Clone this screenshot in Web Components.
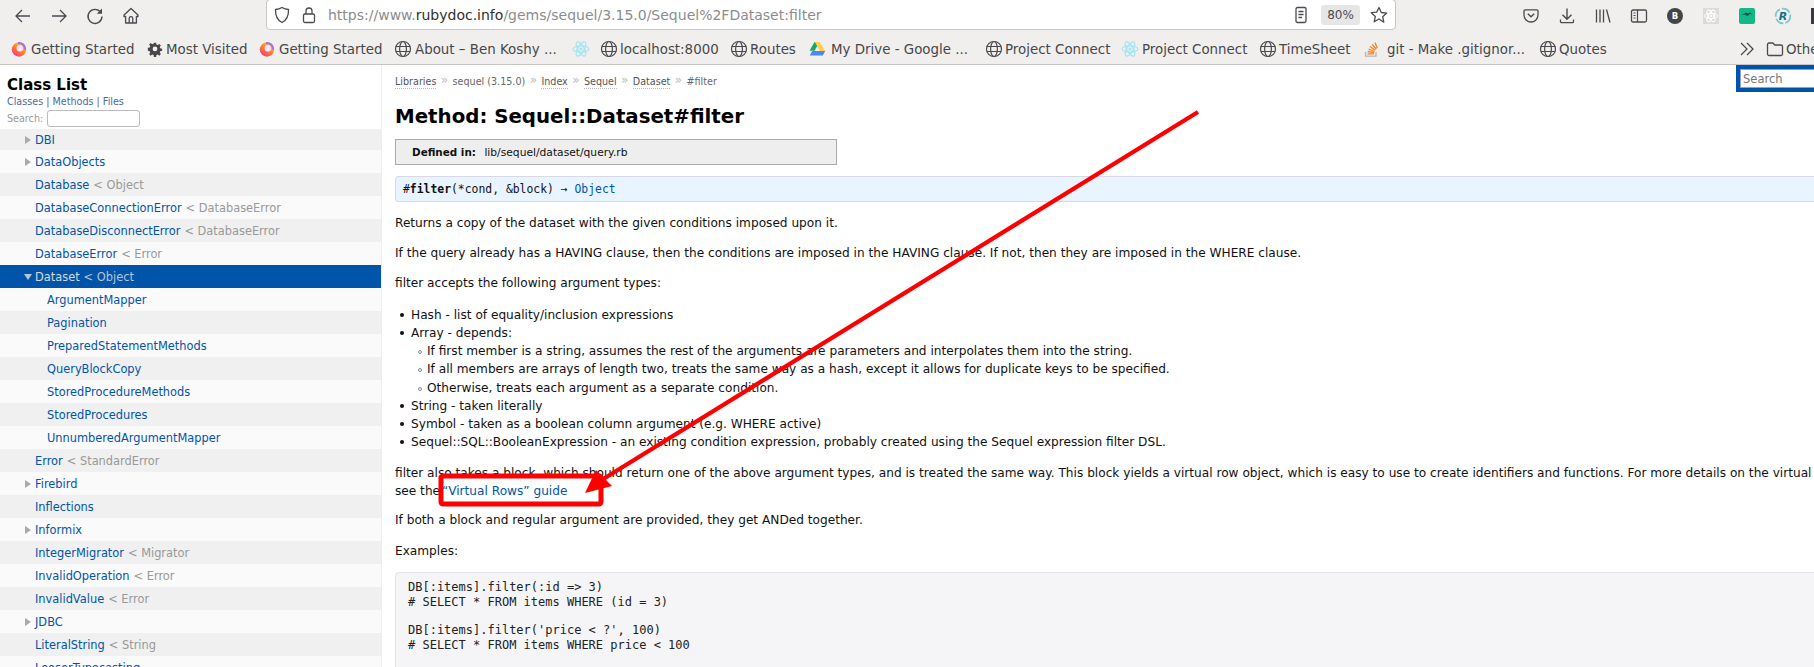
<!DOCTYPE html>
<html>
<head>
<meta charset="utf-8">
<title>Method: Sequel::Dataset#filter</title>
<style>
    html, body {
        margin: 0;
        height: 667px;
        overflow: hidden;
        background: #fff;
        font-family: "DejaVu Sans", sans-serif;
    }
    body {
        display: flex;
        flex-direction: column;
        position: relative;
    }
    .page {
        display: flex;
        flex: 1;
        min-height: 0;
    }
</style>
</head>
<body>
    <nav-toolbar></nav-toolbar>
    <bookmark-bar>
        <bookmark-item icon="firefox" width="136" gap="4">Getting Started</bookmark-item>
        <bookmark-item icon="gear" width="112">Most Visited</bookmark-item>
        <bookmark-item icon="firefox" width="136" gap="4">Getting Started</bookmark-item>
        <bookmark-item icon="globe" width="178" gap="4">About – Ben Koshy ...</bookmark-item>
        <bookmark-item icon="react" width="28"></bookmark-item>
        <bookmark-item icon="globe" width="130">localhost:8000</bookmark-item>
        <bookmark-item icon="globe" width="78">Routes</bookmark-item>
        <bookmark-item icon="drive" width="177" gap="6">My Drive - Google ...</bookmark-item>
        <bookmark-item icon="globe" width="136">Project Connect</bookmark-item>
        <bookmark-item icon="react" width="138" gap="4">Project Connect</bookmark-item>
        <bookmark-item icon="globe" width="103">TimeSheet</bookmark-item>
        <bookmark-item icon="so" width="177" gap="8">git - Make .gitignor...</bookmark-item>
        <bookmark-item icon="globe" width="199">Quotes</bookmark-item>
        <bookmark-item icon="chevrons" width="28"></bookmark-item>
        <bookmark-item icon="folder" width="60">Other Bookmarks</bookmark-item>
    </bookmark-bar>

    <div class="page">
        <class-list>
            <class-row arrow="right" first>DBI</class-row>
            <class-row arrow="right">DataObjects</class-row>
            <class-row sup="Object">Database</class-row>
            <class-row sup="DatabaseError">DatabaseConnectionError</class-row>
            <class-row sup="DatabaseError">DatabaseDisconnectError</class-row>
            <class-row sup="Error">DatabaseError</class-row>
            <class-row arrow="down" sup="Object" selected>Dataset</class-row>
            <class-row nested>ArgumentMapper</class-row>
            <class-row nested>Pagination</class-row>
            <class-row nested>PreparedStatementMethods</class-row>
            <class-row nested>QueryBlockCopy</class-row>
            <class-row nested>StoredProcedureMethods</class-row>
            <class-row nested>StoredProcedures</class-row>
            <class-row nested>UnnumberedArgumentMapper</class-row>
            <class-row sup="StandardError">Error</class-row>
            <class-row arrow="right">Firebird</class-row>
            <class-row>Inflections</class-row>
            <class-row arrow="right">Informix</class-row>
            <class-row sup="Migrator">IntegerMigrator</class-row>
            <class-row sup="Error">InvalidOperation</class-row>
            <class-row sup="Error">InvalidValue</class-row>
            <class-row arrow="right">JDBC</class-row>
            <class-row sup="String">LiteralString</class-row>
            <class-row>LooserTypecasting</class-row>
        </class-list>
        <doc-view></doc-view>
    </div>

    <corner-search></corner-search>
    <red-callout></red-callout>

<script>
const ICONS = {
    back: '<path d="M17 10H3.500M9 4l-6 6 6 6" fill="none" stroke="#4a4a4f" stroke-width="1.300"/>',
    forward: '<path d="M3 10h13.500M11 4l6 6-6 6" fill="none" stroke="#4a4a4f" stroke-width="1.300"/>',
    reload: '<path d="M15.600 6.200A7 7 0 1 0 17 10.500" fill="none" stroke="#4a4a4f" stroke-width="1.400"/><path d="M17 2.500v5.200h-5.200z" fill="#4a4a4f"/>',
    home: '<path d="M10 2.500L3 9v1.500h1.600V17h10.800v-6.500H17V9zM8.200 17v-4.600a1.800 1.800 0 0 1 3.600 0V17" fill="none" stroke="#4a4a4f" stroke-width="1.300" stroke-linejoin="round"/>',
    shield: '<path d="M10 2.500c2 1.300 4.300 1.900 6.500 2 .2 5.800-1.300 10.500-6.500 13-5.200-2.500-6.700-7.200-6.500-13 2.200-.1 4.500-.7 6.500-2z" fill="none" stroke="#4a4a4f" stroke-width="1.300"/>',
    lock: '<rect x="4.500" y="9" width="11" height="8.500" rx="1.500" fill="none" stroke="#4a4a4f" stroke-width="1.300"/><path d="M7 9V6a3 3 0 0 1 6 0v3" fill="none" stroke="#4a4a4f" stroke-width="1.300"/>',
    reader: '<rect x="5" y="2.500" width="10" height="15" rx="1.500" fill="none" stroke="#4a4a4f" stroke-width="1.300"/><path d="M7.500 6.500h5M7.500 9.500h5M7.500 12.500h3.500" stroke="#4a4a4f" stroke-width="1.300"/>',
    star: '<path d="M10 2.500l2.300 5 5.400.6-4 3.700 1.100 5.400L10 14l-4.800 2.800 1.100-5.400-4-3.700 5.400-.6z" fill="none" stroke="#4a4a4f" stroke-width="1.300" stroke-linejoin="round"/>',
    pocket: '<path d="M4 3.800h12a1 1 0 0 1 1 1V9a7 7 0 0 1-14 0V4.800a1 1 0 0 1 1-1z" fill="none" stroke="#4a4a4f" stroke-width="1.300"/><path d="M6.800 7.800L10 10.800l3.200-3" fill="none" stroke="#4a4a4f" stroke-width="1.400"/>',
    download: '<path d="M10 2.500v10.500M5.500 8.800L10 13.300l4.500-4.500" fill="none" stroke="#4a4a4f" stroke-width="1.400"/><path d="M3.500 13.500v2.200a1 1 0 0 0 1 1h11a1 1 0 0 0 1-1v-2.200" fill="none" stroke="#4a4a4f" stroke-width="1.300"/>',
    library: '<path d="M3.500 3.500v13M7 3.500v13M10.500 3.500v13M13.500 3.500l3.500 13" fill="none" stroke="#4a4a4f" stroke-width="1.300"/>',
    sidebar: '<rect x="2.500" y="4" width="15" height="12" rx="1.500" fill="none" stroke="#4a4a4f" stroke-width="1.300"/><path d="M8.500 4v12M4.500 7h2M4.500 9.500h2M4.500 12h2" stroke="#4a4a4f" stroke-width="1.200"/>',
    avatar: '<circle cx="10" cy="10" r="8" fill="#454548"/><text x="10" y="13.200" text-anchor="middle" font-family="DejaVu Sans" font-weight="700" font-size="8.500" fill="#fff">B</text>',
    reactbox: '<rect x="2" y="2" width="16" height="16" fill="#dbdbdb"/><g fill="none" stroke="#fff" stroke-width="1"><ellipse cx="10" cy="10" rx="6.500" ry="2.600"/><ellipse cx="10" cy="10" rx="6.500" ry="2.600" transform="rotate(60 10 10)"/><ellipse cx="10" cy="10" rx="6.500" ry="2.600" transform="rotate(120 10 10)"/></g><circle cx="10" cy="10" r="1.300" fill="#fff"/>',
    greenbox: '<rect x="2" y="2" width="16" height="16" rx="2" fill="#12b886"/><path d="M5 9l4-2.500 2 1 2-1 2.500 2-3-.5-1 1.500H9L8 8.500z" fill="#0d4f45"/>',
    rbadge: '<circle cx="10" cy="10" r="7.300" fill="none" stroke="#7cc9cd" stroke-width="1.800" stroke-dasharray="9 2"/><text x="10" y="14" text-anchor="middle" font-family="DejaVu Sans" font-style="italic" font-weight="700" font-size="11" fill="#176f85">R</text>',
    darkbox: '<rect x="2" y="2" width="16" height="16" fill="#3a3a3c"/>',
    firefox: '<defs><linearGradient id="ff" x1="0.800" y1="0.100" x2="0.200" y2="0.900"><stop offset="0" stop-color="#ffc83d"/><stop offset=".55" stop-color="#ff7a2f"/><stop offset="1" stop-color="#f43f78"/></linearGradient></defs><circle cx="10" cy="10.500" r="7.200" fill="url(#ff)"/><path d="M9 3a7.200 7.200 0 0 1 8.200 7.500l-2 .2A5.300 5.300 0 0 0 9 5.200z" fill="#a56df0"/><circle cx="10.800" cy="9.300" r="3.200" fill="#f5e9ff"/>',
    gear: '<g transform="translate(1.500 1.500) scale(.85)"><path d="M8.700 2.500h2.600l.4 2.200 1.500.6 1.900-1.300 1.800 1.800-1.300 1.900.6 1.500 2.200.4v2.600l-2.200.4-.6 1.500 1.300 1.900-1.800 1.800-1.900-1.300-1.500.6-.4 2.200H8.700l-.4-2.200-1.500-.6-1.900 1.300-1.800-1.800 1.300-1.900-.6-1.500-2.200-.4V8.600l2.200-.4.6-1.500L3.100 4.800 4.900 3l1.900 1.300 1.500-.6z" fill="#47474a"/><circle cx="10" cy="9.900" r="2.800" fill="#f0efee"/></g>',
    globe: '<g fill="none" stroke="#4a4a4f" stroke-width="1.200"><circle cx="10" cy="10" r="7.500"/><ellipse cx="10" cy="10" rx="3.400" ry="7.500"/><path d="M2.800 7.500h14.400M2.800 12.500h14.400"/></g>',
    react: '<g fill="none" stroke="#a3e4f7" stroke-width="1.200"><ellipse cx="10" cy="10" rx="8" ry="3.200"/><ellipse cx="10" cy="10" rx="8" ry="3.200" transform="rotate(60 10 10)"/><ellipse cx="10" cy="10" rx="8" ry="3.200" transform="rotate(120 10 10)"/></g><circle cx="10" cy="10" r="1.600" fill="#a3e4f7"/>',
    drive: '<path d="M7.500 3h5l-5 8.800H2.500z" fill="#1fa463"/><path d="M12.500 3l5.500 9h-5L7.800 3z" fill="#ffd04b"/><path d="M5.200 12h13l-2.500 4.500H2.700z" fill="#4687f4"/>',
    so: '<path d="M4.500 13v4.200h10.500V13" fill="none" stroke="#b5b5b5" stroke-width="1.300"/><path d="M6.500 14.800h6.500M6.700 12.500l6.400 1.100M7.500 10l6 2.500M9 7.500l5.300 3.700M11.200 5.300l4 4.800M14 3.500l2.300 5.700" stroke="#f48024" stroke-width="1.300" fill="none"/>',
    chevrons: '<path d="M4 4l6 6-6 6M10 4l6 6-6 6" fill="none" stroke="#4a4a4f" stroke-width="1.300"/>',
    folder: '<path d="M2.500 5.500a1.500 1.500 0 0 1 1.500-1.500h3.800l2 2H16a1.500 1.500 0 0 1 1.500 1.500v7.500A1.500 1.500 0 0 1 16 16.500H4A1.500 1.500 0 0 1 2.500 15z" fill="none" stroke="#4a4a4f" stroke-width="1.300"/>'
};

class ToolIcon extends HTMLElement {
    constructor() {
        super();
        this.shadowDOM = this.attachShadow({ mode: 'open' });
    }

    connectedCallback() {
        const size = this.getAttribute('size') || 20;
        this.shadowDOM.innerHTML = `
            <style>
                :host { display: inline-flex; flex: none; }
                svg { display: block; }
            </style>
            <svg width="${size}" height="${size}" viewBox="0 0 20 20">${ICONS[this.getAttribute('name')]}</svg>
        `;
    }
}

class NavToolbar extends HTMLElement {
    constructor() {
        super();
        this.shadowDOM = this.attachShadow({ mode: 'open' });
    }

    connectedCallback() {
        const slot = (name) => `<span class="slot"><tool-icon name="${name}"></tool-icon></span>`;
        this.shadowDOM.innerHTML = `
            <style>
                :host {
                    display: flex;
                    flex: none;
                    height: 33px;
                    padding-left: 5px;
                    background: #f0efee;
                    align-items: flex-start;
                    overflow: hidden;
                    font-family: "DejaVu Sans", sans-serif;
                }
                .slot {
                    flex: none;
                    width: 36px;
                    height: 31px;
                    display: flex;
                    align-items: center;
                    justify-content: center;
                }
                .nav { display: flex; flex: none; width: 145px; margin-right: 116px; }
                .url {
                    box-sizing: border-box;
                    flex: none;
                    width: 1130px;
                    height: 31px;
                    margin-top: -1px;
                    background: #fff;
                    border: 1px solid #c9c6c2;
                    border-radius: 4px;
                    display: flex;
                    align-items: center;
                    padding-left: 5px;
                    font-size: 14px;
                    color: #8c8c8c;
                }
                .url tool-icon { margin-right: 7px; }
                .addr { flex: 1; margin-left: 2px; white-space: nowrap; }
                .addr b { font-weight: 400; color: #303030; }
                .zoom {
                    width: 39px;
                    height: 20px;
                    margin: 0 9px 0 10px;
                    background: #e6e6e6;
                    border-radius: 3px;
                    font-size: 12px;
                    color: #4a4a4f;
                    display: flex;
                    align-items: center;
                    justify-content: center;
                }
                .tools { display: flex; flex: none; margin-left: 117px; }
            </style>
            <div class="nav">${['back', 'forward', 'reload', 'home'].map(slot).join('')}</div>
            <div class="url">
                <tool-icon name="shield"></tool-icon>
                <tool-icon name="lock"></tool-icon>
                <span class="addr">https://www.<b>rubydoc.info</b>/gems/sequel/3.15.0/Sequel%2FDataset:filter</span>
                <tool-icon name="reader" style="margin:0"></tool-icon>
                <span class="zoom">80%</span>
                <tool-icon name="star" style="margin:0 6px 0 0"></tool-icon>
            </div>
            <div class="tools">${['pocket', 'download', 'library', 'sidebar', 'avatar', 'reactbox', 'greenbox', 'rbadge', 'darkbox'].map(slot).join('')}</div>
        `;
    }
}

class BookmarkBar extends HTMLElement {
    constructor() {
        super();
        this.shadowDOM = this.attachShadow({ mode: 'open' });
    }

    connectedCallback() {
        this.shadowDOM.innerHTML = `
            <style>
                :host {
                    display: flex;
                    flex: none;
                    box-sizing: border-box;
                    height: 32px;
                    padding: 1px 0 0 10px;
                    background: #f0efee;
                    border-bottom: 1px solid #c8c6c3;
                    align-items: center;
                    overflow: hidden;
                    white-space: nowrap;
                }
            </style>
            <slot></slot>
        `;
    }
}

class BookmarkItem extends HTMLElement {
    constructor() {
        super();
        this.shadowDOM = this.attachShadow({ mode: 'open' });
    }

    connectedCallback() {
        this.shadowDOM.innerHTML = `
            <style>
                :host {
                    display: flex;
                    flex: none;
                    width: ${this.getAttribute('width')}px;
                    align-items: center;
                    gap: ${this.getAttribute('gap') || 3}px;
                    font-family: "DejaVu Sans", sans-serif;
                    font-size: 13.400px;
                    color: #47474a;
                    overflow: hidden;
                }
                tool-icon { margin: 0 -1.500px; }
            </style>
            <tool-icon name="${this.getAttribute('icon')}"></tool-icon>
            <slot></slot>
        `;
    }
}

class ClassList extends HTMLElement {
    constructor() {
        super();
        this.shadowDOM = this.attachShadow({ mode: 'open' });
    }

    connectedCallback() {
        this.shadowDOM.innerHTML = `
            <style>
                :host {
                    display: flex;
                    flex-direction: column;
                    flex: none;
                    width: 381px;
                    overflow: hidden;
                    background: #fff;
                    font-family: "DejaVu Sans", sans-serif;
                }
                header { flex: none; height: 64px; padding-left: 7px; box-sizing: border-box; }
                h1 { margin: 0; padding-top: 11px; font-size: 15px; line-height: 18px; color: #000; }
                .links { font-size: 9.600px; line-height: 14px; margin-top: 1px; color: #666; }
                .links a { color: #4a6a9c; }
                .find { display: flex; align-items: center; font-size: 9.600px; color: #999; margin-top: 1px; }
                .find input {
                    box-sizing: border-box;
                    width: 93px;
                    height: 17px;
                    margin: 0 0 0 4px;
                    border: 1px solid #bbb;
                    border-radius: 3px;
                    background: #fff;
                }
            </style>
            <header>
                <h1>Class List</h1>
                <div class="links"><a>Classes</a> | <a>Methods</a> | <a>Files</a></div>
                <div class="find">Search:<input type="text"></div>
            </header>
            <slot></slot>
        `;
    }
}

class ClassRow extends HTMLElement {
    constructor() {
        super();
        this.shadowDOM = this.attachShadow({ mode: 'open' });
    }

    connectedCallback() {
        const sup = this.getAttribute('sup');
        const arrow = this.getAttribute('arrow');
        const index = [...this.parentNode.children].indexOf(this);
        this.shadowDOM.innerHTML = `
            <style>
                :host {
                    display: flex;
                    flex: none;
                    height: ${this.hasAttribute('first') ? 21 : 23}px;
                    align-items: center;
                    position: relative;
                    padding-left: ${this.hasAttribute('nested') ? 47 : 35}px;
                    background: ${index % 2 ? '#fafafa' : '#f0f0f0'};
                    font-size: 11.400px;
                    white-space: nowrap;
                    color: #0055aa;
                }
                :host([selected]) { background: #0055aa; color: #d8d8d8; }
                .sup { color: #999; margin-left: 4px; }
                :host([selected]) .sup { color: #b8c4d4; }
                .arrow { width: 0; height: 0; position: absolute; left: 25px; top: 50%; margin-top: -4px; }
                .right { border-left: 6px solid #aaa; border-top: 4px solid transparent; border-bottom: 4px solid transparent; }
                .down { border-top: 6px solid #b8c4d4; border-left: 4px solid transparent; border-right: 4px solid transparent; left: 24px; margin-top: -3px; }
            </style>
            ${arrow ? `<span class="arrow ${arrow}"></span>` : ''}
            <slot></slot>
            ${sup ? `<span class="sup">&lt; ${sup}</span>` : ''}
        `;
    }
}

class DocView extends HTMLElement {
    constructor() {
        super();
        this.shadowDOM = this.attachShadow({ mode: 'open' });
    }

    connectedCallback() {
        this.shadowDOM.innerHTML = `
            <style>
                :host {
                    display: block;
                    flex: 1;
                    min-width: 0;
                    overflow: hidden;
                    padding: 10px 0 0 13px;
                    border-left: 1px solid #eee;
                    font-family: "DejaVu Sans", sans-serif;
                    font-size: 12.150px;
                    line-height: 18px;
                    color: #111;
                    white-space: nowrap;
                }
                .crumbs { font-size: 9.600px; line-height: 14px; color: #666; display: flex; align-items: center; }
                .crumbs a { border-bottom: 1px dotted #bbb; line-height: 12px; color: #555; }
                .crumbs i { font-style: normal; font-size: 12px; color: #bbb; margin: -5px 4.400px 0; }
                h1 { margin: 16px 0 0; font-size: 19.800px; line-height: 24px; color: #000; }
                .box {
                    box-sizing: border-box;
                    width: 442px;
                    height: 26px;
                    margin-top: 10px;
                    padding-left: 16px;
                    background: #eee;
                    border: 1px solid #aaa;
                    line-height: 24px;
                    font-size: 10.700px;
                }
                .box b { font-size: 10.400px; margin-right: 5px; }
                .sig {
                    box-sizing: border-box;
                    width: 1500px;
                    height: 26px;
                    margin-top: 11px;
                    padding-left: 7px;
                    background: #e8f4ff;
                    border: 1px solid #d8d8e7;
                    border-radius: 3px;
                    font-family: "DejaVu Sans Mono", monospace;
                    font-size: 11.400px;
                    line-height: 24px;
                }
                a { color: #0055aa; }
                p { margin: 12px 0 0; }
                ul { margin: 14px 0 0; padding: 0 0 0 16px; list-style: none; }
                ul ul { margin: 0; }
                li { position: relative; line-height: 18.150px; }
                li::before {
                    content: "";
                    position: absolute;
                    left: -11px;
                    top: 7px;
                    width: 4px;
                    height: 4px;
                    border-radius: 50%;
                    background: #111;
                }
                ul ul li::before { background: none; border: 1px solid #888; width: 2px; height: 2px; left: -9px; top: 8px; }
                ul + p { margin-top: 13px; }
                p a { margin-left: -2px; }
                p.tight { margin-top: 11px; }
                p.loose { margin-top: 13px; }
                pre {
                    box-sizing: border-box;
                    width: 1500px;
                    height: 200px;
                    margin: 12px 0 0;
                    padding: 7px 0 0 12px;
                    background: #f5f5f8;
                    border: 1px solid #e2e2ea;
                    border-radius: 4px;
                    font-family: "DejaVu Sans Mono", monospace;
                    font-size: 12px;
                    line-height: 14.400px;
                    color: #222;
                }
            </style>
            <div class="crumbs">
                <a>Libraries</a><i>»</i><span>sequel (3.15.0)</span><i>»</i><a>Index</a><i>»</i><a>Sequel</a><i>»</i><a>Dataset</a><i>»</i><span>#filter</span>
            </div>
            <h1>Method: Sequel::Dataset#filter</h1>
            <div class="box"><b>Defined in:</b> lib/sequel/dataset/query.rb</div>
            <div class="sig"><span>#<b>filter</b>(*cond, &amp;block) → <a>Object</a></span></div>
            <p>Returns a copy of the dataset with the given conditions imposed upon it.</p>
            <p>If the query already has a HAVING clause, then the conditions are imposed in the HAVING clause. If not, then they are imposed in the WHERE clause.</p>
            <p>filter accepts the following argument types:</p>
            <ul>
                <li>Hash - list of equality/inclusion expressions</li>
                <li>Array - depends:
                    <ul>
                        <li>If first member is a string, assumes the rest of the arguments are parameters and interpolates them into the string.</li>
                        <li>If all members are arrays of length two, treats the same way as a hash, except it allows for duplicate keys to be specified.</li>
                        <li>Otherwise, treats each argument as a separate condition.</li>
                    </ul>
                </li>
                <li>String - taken literally</li>
                <li>Symbol - taken as a boolean column argument (e.g. WHERE active)</li>
                <li>Sequel::SQL::BooleanExpression - an existing condition expression, probably created using the Sequel expression filter DSL.</li>
            </ul>
            <p>filter also takes a block, which should return one of the above argument types, and is treated the same way. This block yields a virtual row object, which is easy to use to create identifiers and functions. For more details on the virtual row API,<br>see the <a>“Virtual Rows” guide</a></p>
            <p class="tight">If both a block and regular argument are provided, they get ANDed together.</p>
            <p class="loose">Examples:</p>
            <pre>DB[:items].filter(:id =&gt; 3)
# SELECT * FROM items WHERE (id = 3)

DB[:items].filter('price &lt; ?', 100)
# SELECT * FROM items WHERE price &lt; 100</pre>
        `;
    }
}

class CornerSearch extends HTMLElement {
    constructor() {
        super();
        this.shadowDOM = this.attachShadow({ mode: 'open' });
    }

    connectedCallback() {
        this.shadowDOM.innerHTML = `
            <style>
                :host {
                    position: absolute;
                    left: 1736px;
                    top: 65px;
                    width: 100px;
                    height: 27px;
                    box-sizing: border-box;
                    border: 4px solid #0055aa;
                    background: #fff;
                    box-shadow: inset 0 0 0 1px #8c9ee0;
                    padding-left: 3px;
                    font: 11.500px/20px "DejaVu Sans", sans-serif;
                    color: #777;
                }
            </style>
            Search
        `;
    }
}

class RedCallout extends HTMLElement {
    constructor() {
        super();
        this.shadowDOM = this.attachShadow({ mode: 'open' });
    }

    connectedCallback() {
        this.shadowDOM.innerHTML = `
            <style>
                :host { position: absolute; left: 0; top: 0; pointer-events: none; }
                svg { display: block; }
            </style>
            <svg width="1814" height="667">
                <rect x="441" y="476" width="160" height="28" rx="2" fill="none" stroke="#ff0000" stroke-width="5"/>
                <path d="M1198 112L600 481" stroke="#ff0000" stroke-width="4.200" fill="none"/>
                <path d="M585 493L596 470L612 486z" fill="#ff0000"/>
            </svg>
        `;
    }
}

customElements.define('tool-icon', ToolIcon);
customElements.define('nav-toolbar', NavToolbar);
customElements.define('bookmark-bar', BookmarkBar);
customElements.define('bookmark-item', BookmarkItem);
customElements.define('class-list', ClassList);
customElements.define('class-row', ClassRow);
customElements.define('doc-view', DocView);
customElements.define('corner-search', CornerSearch);
customElements.define('red-callout', RedCallout);
</script>
</body>
</html>
